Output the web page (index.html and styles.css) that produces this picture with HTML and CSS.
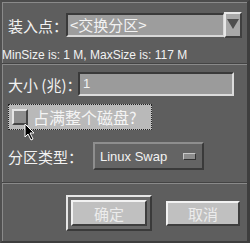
FILE: index.html
```html
<!DOCTYPE html>
<html lang="zh">
<head>
    <meta charset="UTF-8">
    <title>交换分区</title>
    <link rel="stylesheet" href="styles.css">
</head>
<body>
    <div class="dialog">
        <div class="row mount">
            <span class="label mount-label">装入点：</span>
            <div class="combo">&lt;交换分区&gt;</div>
            <div class="combo-arrow"><span class="tri"></span></div>
        </div>
        <p class="info">MinSize is: 1 M, MaxSize is: 117 M</p>
        <div class="sep"></div>
        <div class="row size">
            <span class="label size-label">大小 (兆)：</span>
            <div class="field">1</div>
        </div>
        <div class="check">
            <span class="box"></span>
            <span class="check-text">占满整个磁盘?</span>
        </div>
        <div class="row type">
            <span class="label type-label">分区类型：</span>
            <div class="option">
                <span>Linux Swap</span>
                <span class="indicator"></span>
            </div>
        </div>
        <div class="sep sep-low"></div>
        <div class="buttons">
            <div class="default-ring"><div class="btn">确定</div></div>
            <div class="btn cancel">取消</div>
        </div>
        <svg class="cursor" width="12" height="18" viewBox="0 0 12 18">
            <path d="M1 1 L1 14 L4 11 L7 17 L9 16 L6 10 L10 10 Z" fill="#000" stroke="#fff" stroke-width="1"/>
        </svg>
    </div>
</body>
</html>
```

FILE: styles.css
```css
body {
    margin: 0;
    background: #5e5e5e;
    font-family: "Noto Sans CJK SC", "Liberation Sans", sans-serif;
    color: #f2f2f2;
}
.dialog {
    position: relative;
    width: 250px;
    height: 243px;
    box-sizing: border-box;
    border-top: 2px solid #4c4c4c;
    border-left: 2px solid #505050;
    border-right: 3px solid #3e3e3e;
    border-bottom: 2px solid #3e3e3e;
    box-shadow: inset 1px 1px 0 #8a8a8a;
    overflow: hidden;
}
.row {
    display: flex;
    align-items: center;
}
.label {
    font-size: 15px;
    padding-left: 6px;
    box-sizing: border-box;
    white-space: nowrap;
}
.mount {
    margin-top: 10px;
    height: 26px;
}
.mount-label {
    width: 64px;
}
.combo {
    width: 158px;
    height: 24px;
    box-sizing: border-box;
    background: #9d9d9d;
    border-top: 2px solid #3a3a3a;
    border-left: 2px solid #3a3a3a;
    border-bottom: 2px solid #d8d8d8;
    border-right: 1px solid #d8d8d8;
    font-size: 15px;
    line-height: 20px;
    padding-left: 2px;
}
.combo-arrow {
    width: 18px;
    height: 26px;
    box-sizing: border-box;
    background: #a9a9a9;
    border-top: 2px solid #e8e8e8;
    border-left: 2px solid #e8e8e8;
    border-right: 2px solid #404040;
    border-bottom: 2px solid #404040;
    display: flex;
    justify-content: center;
    padding-top: 5px;
}
.tri {
    width: 0;
    height: 0;
    border-left: 6px solid transparent;
    border-right: 6px solid transparent;
    border-top: 10px solid #4e4e4e;
}
.info {
    margin: 10px 0 0;
    font-family: "Liberation Sans", sans-serif;
    font-size: 12px;
    line-height: 14px;
    white-space: nowrap;
}
.sep {
    margin-top: 1px;
    height: 1px;
    border-top: 1px solid #444;
    background: #8a8a8a;
}
.size {
    margin-top: 7px;
    height: 24px;
}
.size-label {
    width: 76px;
}
.field {
    width: 156px;
    height: 24px;
    box-sizing: border-box;
    background: #9b9b9b;
    border-top: 2px solid #3a3a3a;
    border-left: 2px solid #3a3a3a;
    border-bottom: 2px solid #dcdcdc;
    border-right: 2px solid #dcdcdc;
    font-family: "Liberation Sans", sans-serif;
    font-size: 13px;
    line-height: 20px;
    padding-left: 3px;
}
.check {
    margin: 8px 0 0 6px;
    width: 144px;
    height: 26px;
    box-sizing: border-box;
    background: #b9b9b9;
    border: 1px dotted #222;
    display: flex;
    align-items: center;
    padding-left: 3px;
    gap: 5px;
}
.box {
    width: 16px;
    height: 16px;
    box-sizing: border-box;
    background: #8d8d8d;
    border-top: 2px solid #e4e4e4;
    border-left: 2px solid #e4e4e4;
    border-right: 2px solid #444;
    border-bottom: 2px solid #444;
}
.check-text {
    font-size: 16px;
    color: #f4f4f4;
    white-space: nowrap;
}
.type {
    margin-top: 12px;
    height: 28px;
}
.type-label {
    width: 91px;
}
.option {
    width: 111px;
    height: 28px;
    box-sizing: border-box;
    background: #646464;
    border-top: 2px solid #8e8e8e;
    border-left: 2px solid #8e8e8e;
    border-right: 2px solid #3a3a3a;
    border-bottom: 2px solid #3a3a3a;
    display: flex;
    align-items: center;
    justify-content: space-between;
    padding: 0 6px 0 5px;
    font-family: "Liberation Sans", sans-serif;
    font-size: 13px;
}
.indicator {
    width: 13px;
    height: 7px;
    box-sizing: border-box;
    background: #8c8c8c;
    border-top: 1px solid #c8c8c8;
    border-left: 1px solid #c8c8c8;
    border-right: 1px solid #333;
    border-bottom: 1px solid #333;
}
.sep-low {
    margin-top: 12px;
}
.buttons {
    margin-top: 11px;
    display: flex;
    align-items: center;
    padding-left: 64px;
    gap: 14px;
}
.default-ring {
    width: 86px;
    height: 36px;
    box-sizing: border-box;
    border: 2px solid #e6e6e6;
    border-right-color: #3a3a3a;
    border-bottom-color: #3a3a3a;
    background: #6a6a6a;
    padding: 3px;
    display: flex;
}
.default-ring .btn {
    width: 100%;
    height: 100%;
}
.btn {
    box-sizing: border-box;
    width: 74px;
    height: 25px;
    background: #c0c0c0;
    border-top: 2px solid #f2f2f2;
    border-left: 2px solid #f2f2f2;
    border-right: 2px solid #3e3e3e;
    border-bottom: 2px solid #3e3e3e;
    color: #ececec;
    font-size: 15px;
    display: flex;
    align-items: center;
    justify-content: center;
}
.cursor {
    position: absolute;
    left: 22px;
    top: 121px;
}
```
